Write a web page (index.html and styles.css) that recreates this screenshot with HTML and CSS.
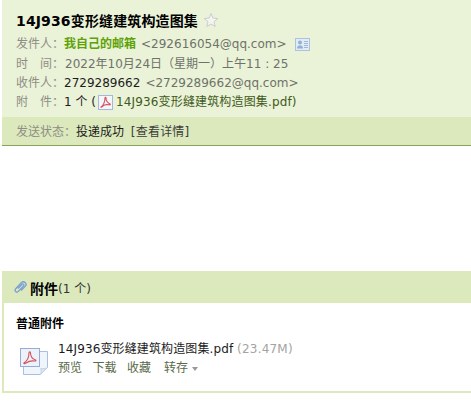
FILE: index.html
```html
<!DOCTYPE html>
<html>
<head>
  <title>14J936变形缝建筑构造图集</title>
  <meta charset="utf-8">
  <link rel="stylesheet" href="styles.css">
</head>
<body>
  <div class="mail-head">
    <div class="subject">
      <span class="subject-text">14J936变形缝建筑构造图集</span>
      <svg class="star" width="16" height="16" viewBox="0 0 16 16"><path d="M8 1.5l1.900 4.600 4.900.4-3.800 3.200 1.200 4.800L8 12l-4.200 2.500L5 9.700 1.200 6.500l4.900-.4z" fill="#f4f6ee" stroke="#c9cdd6"/></svg>
    </div>
    <div class="row row-sender">
      <span class="label">发件人：</span><span class="sender">我自己的邮箱</span>
      <span class="addr">&lt;292616054@qq.com&gt;</span>
      <svg class="card" width="15" height="13" viewBox="0 0 15 13"><rect x=".5" y=".5" width="14" height="12" fill="#e3ecf2" stroke="#a9c3e0"/><circle cx="5" cy="4.500" r="2" fill="#8fb0d8"/><path d="M2 10.500c0-2.500 1.500-3 3-3s3 .5 3 3z" fill="#8fb0d8"/><path d="M9 3.500h4M9 5.500h4M9 7.500h4M9 9.500h4" stroke="#9db8d8"/></svg>
    </div>
    <div class="row">
      <span class="label">时　间：</span><span class="muted date">2022年10月24日（星期一）上午11 : 25</span>
    </div>
    <div class="row">
      <span class="label">收件人：</span><span class="dark">2729289662</span>
      <span class="addr">&lt;2729289662@qq.com&gt;</span>
    </div>
    <div class="row">
      <span class="label">附　件：</span><span class="dark">1 个 (</span><svg class="pdf-small" width="15" height="15" viewBox="0 0 15 15"><rect x=".5" y=".5" width="14" height="14" fill="#f6f6fa" stroke="#a4b8dc"/><path d="M3 12c2-1 4-5 4-9 0-1 1-1 1 0 0 3 2 5 4 6 .8.500 0 1-1 .8-2-.3-5 0-6.500 1.500C3.500 12.500 2.500 12.500 3 12z" fill="none" stroke="#d0525a" stroke-width="1.100"/></svg><span class="file-link">14J936变形缝建筑构造图集.pdf)</span>
    </div>
    <div class="status">
      <span class="label">发送状态：</span><span class="dark">投递成功</span>
      <span class="detail">[查看详情]</span>
    </div>
  </div>

  <div class="attach">
    <div class="attach-title">
      <svg class="clip" width="15" height="15" viewBox="0 0 15 15"><path d="M5 8.500l4-4.300c1-1 2.600.4 1.600 1.600l-5.200 5.600c-1.800 1.800-4.500-.7-2.700-2.700l5.600-6c2.500-2.500 6.400.8 3.900 3.700L8 10.500" fill="none" stroke="#7a9fd2" stroke-width="1.300"/></svg>
      <b class="attach-name">附件</b><span class="count">(1 个)</span>
    </div>
    <div class="attach-body">
      <div class="attach-kind">普通附件</div>
      <div class="attach-item">
        <svg class="pdf-big" width="29" height="28" viewBox="0 0 29 28"><path d="M3.500 3.500h24v16l-7 7h-17z" fill="#f0f4fb" stroke="#a9bfe0"/><path d="M20.500 26.500c1-2 1-5 0-6 2 .5 5 .5 7-1z" fill="#dbe6f5" stroke="#c0d0e8"/><rect x=".5" y=".5" width="19" height="18" fill="#eef1f9" stroke="#93addb"/><path d="M4 15c3-2 5-6 5-10 0-1.500 1.500-1.500 1.500 0 0 4 2.500 6 5 7 1 .5 0 1.200-1 1-3-.4-5.500 0-8.500 2C4.500 16 3.300 15.600 4 15z" fill="none" stroke="#d0525a" stroke-width="1.100"/></svg>
        <div class="attach-info">
          <div><span class="dark file-name">14J936变形缝建筑构造图集.pdf</span> <span class="size">(23.47M)</span></div>
          <div class="actions">
            <span>预览</span><span>下载</span><span>收藏</span><span class="action-more">转存<i class="caret"></i></span>
          </div>
        </div>
      </div>
    </div>
  </div>
</body>
</html>
```

FILE: styles.css
```css
body { margin: 0; padding: 0; background: #fff; font-family: "DejaVu Sans", "Noto Sans CJK SC", sans-serif; font-size: 12px; color: #000; overflow: hidden; }
svg { display: inline-block; flex: none; }

.mail-head { margin-left: 2px; background: #eaf2d8; border-bottom: 1px solid #8aa35a; }
.subject { height: 35px; padding: 4px 0 0 14px; box-sizing: border-box; display: flex; align-items: center; }
.subject-text { font-size: 14px; font-weight: bold; letter-spacing: .14px; }
.star { margin-left: 5px; }
.row { height: 19px; line-height: 19px; padding-left: 14px; display: flex; align-items: center; white-space: nowrap; }
.row-sender { margin-bottom: 1px; }
.label { color: #8e8e84; }
.sender { color: #5fa207; font-weight: bold; }
.addr { color: #6f7268; margin-left: 5px; }
.muted { color: #6f7268; }
.date { margin-left: 1px; }
.dark { color: #1c1c1c; }
.card { margin-left: 8px; }
.pdf-small { margin: 0 3px 0 2px; }
.file-link { color: #3f5a20; letter-spacing: .15px; }
.status { height: 28px; line-height: 30px; margin-top: 5px; padding-left: 14px; background: #dce9bd; }
.detail { color: #3c3c3c; margin-left: 3px; letter-spacing: .2px; }

.attach { margin: 125px 0 0 2px; border-left: 2px solid #dce9bd; border-bottom: 2px solid #dce9bd; }
.attach-title { height: 32px; box-sizing: border-box; margin-left: -2px; padding: 1px 0 0 11px; background: #dce9bd; display: flex; align-items: center; }
.clip { margin-right: 2px; }
.attach-name { font-size: 14px; }
.count { color: #333; }
.attach-body { height: 88px; padding-left: 12px; }
.attach-kind { padding-top: 12px; line-height: 18px; font-weight: bold; }
.attach-item { display: flex; margin-top: 7px; }
.pdf-big { margin: 8px 10px 0 4px; }
.attach-info { line-height: 19px; margin-left: -1px; }
.file-name { letter-spacing: .12px; }
.size { color: #a3a3a3; letter-spacing: .2px; }
.actions { display: flex; gap: 10.500px; color: #5a6a4a; }
.action-more { margin-left: 2.500px; }
.caret { display: inline-block; margin-left: 4px; vertical-align: 1px; border: 3.500px solid transparent; border-top: 4px solid #999; border-bottom: 0; }
```
